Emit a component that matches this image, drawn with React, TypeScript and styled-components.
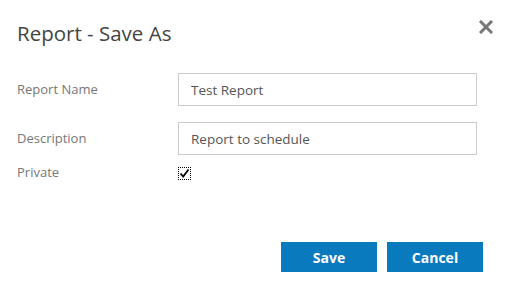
import React from "react";
import styled, { createGlobalStyle } from "styled-components";

const Global = createGlobalStyle`
  body {
    margin: 0;
    background: #fff;
    font-family: "Open Sans", Lato, sans-serif;
  }
`;

const Dialog = styled.div`
  width: 516px;
  height: 285px;
  box-sizing: border-box;
  padding: 0 39px 0 17px;
  display: flex;
  flex-direction: column;
`;

const Header = styled.div`
  display: flex;
  justify-content: space-between;
  align-items: center;
  height: 66px;
  margin-right: -17px;
`;

const Title = styled.h1`
  margin: 0;
  font-size: 20.5px;
  font-weight: 400;
  color: #444;
`;

const Close = styled.button`
  border: none;
  background: none;
  padding: 0;
  width: 16px;
  height: 16px;
  display: flex;
  align-items: center;
  justify-content: center;
  margin-top: -13px;
`;

const Form = styled.div`
  display: flex;
  flex-direction: column;
  padding-top: 7px;
`;

const Row = styled.div<{ $h: number; $mb: number }>`
  display: grid;
  grid-template-columns: 161px 1fr;
  align-items: center;
  height: ${(p) => p.$h}px;
  margin-bottom: ${(p) => p.$mb}px;
`;

const Label = styled.label`
  font-size: 13px;
  color: #777;
  margin-top: -2px;
`;

const Input = styled.input`
  height: 33px;
  box-sizing: border-box;
  border: 1px solid #ccc;
  padding: 0 12px;
  font-family: "Open Sans", Lato, sans-serif;
  font-size: 13.5px;
  color: #555;
  outline: none;
  width: 100%;
`;

const Check = styled.div`
  width: 13px;
  height: 13px;
  box-sizing: border-box;
  border: 1px dotted #000;
  display: flex;
  align-items: center;
  justify-content: center;
  background: #fff;
`;

const Footer = styled.div`
  display: flex;
  justify-content: flex-end;
  gap: 10px;
  margin-top: 61px;
  margin-right: -6px;
`;

const Button = styled.button`
  width: 96px;
  height: 30px;
  border: none;
  background: #0a7abf;
  color: #fff;
  font-family: "Open Sans", Lato, sans-serif;
  font-weight: 700;
  font-size: 14px;
`;

const App = () => {
  return (
    <>
      <Global />
      <Dialog>
        <Header>
          <Title>Report - Save As</Title>
          <Close aria-label="close">
            <svg width="14" height="14" viewBox="0 0 14 14">
              <path d="M2 2L12 12M12 2L2 12" stroke="#777" strokeWidth="3" strokeLinecap="square" />
            </svg>
          </Close>
        </Header>
        <Form>
          <Row $h={33} $mb={16}>
            <Label>Report Name</Label>
            <Input defaultValue="Test Report" />
          </Row>
          <Row $h={33} $mb={10}>
            <Label>Description</Label>
            <Input defaultValue="Report to schedule" />
          </Row>
          <Row $h={16} $mb={0}>
            <Label>Private</Label>
            <Check>
              <svg width="11" height="11" viewBox="0 0 11 11">
                <path d="M1.5 5.5L4.2 8.5L9.5 1.5" stroke="#000" strokeWidth="1.8" fill="none" />
              </svg>
            </Check>
          </Row>
        </Form>
        <Footer>
          <Button>Save</Button>
          <Button>Cancel</Button>
        </Footer>
      </Dialog>
    </>
  );
};

export default App;
